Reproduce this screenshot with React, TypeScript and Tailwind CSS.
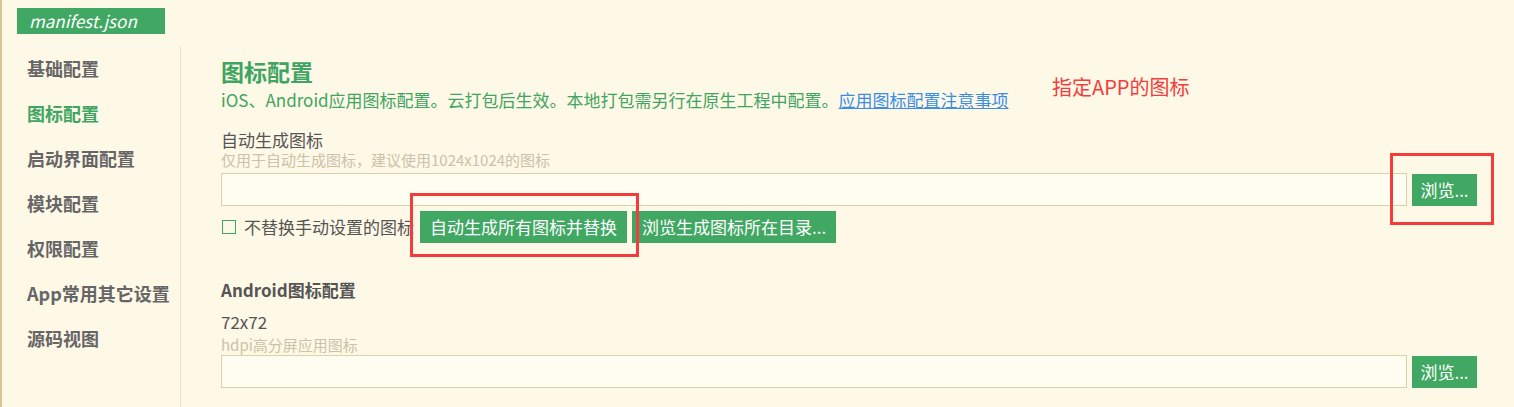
const menu = ["基础配置", "图标配置", "启动界面配置", "模块配置", "权限配置", "App常用其它设置", "源码视图"];

const Btn = ({ label, w }: { label: string; w?: string }) => (
  <button className={`h-[32px] ${w ?? ""} shrink-0 whitespace-nowrap bg-[#41a863] px-[10px] text-[17px] leading-[32px] text-white`}>
    {label}
  </button>
);

const FileRow = () => (
  <div className="flex items-center gap-[5px]">
    <div className="h-[33px] flex-1 border border-[#dcd0a8] bg-[#fffcf2]" />
    <Btn label="浏览..." w="w-[65px] !px-[6px]" />
  </div>
);

export default function App() {
  return (
    <div
      className="relative h-[407px] w-full overflow-hidden border-l-2 border-[#d6c795] bg-[#fef8e6]"
      style={{ fontFamily: '"Noto Sans CJK SC", "Noto Sans", sans-serif' }}
    >
      <div className="pl-[15px] pt-2">
        <div className="h-[26px] w-[148px] bg-[#41a863] pl-[12px] text-[17px] italic leading-[26px] text-white">
          manifest.json
        </div>
      </div>

      <div className="mt-[12px] flex">
        <div className="h-[400px] w-[179px] shrink-0 border-r border-[#efe3c2] pl-[25px]">
          {menu.map((m, i) => (
            <div
              key={m}
              className={`h-[45px] text-[18px] font-bold leading-[45px] ${i === 1 ? "text-[#3fa562]" : "text-[#666]"}`}
            >
              {m}
            </div>
          ))}
        </div>

        <div className="flex-1 pl-[40px] pr-[37px] pt-[10px]">
          <div className="text-[23px] font-bold leading-[30px] text-[#3fa562]">图标配置</div>
          <div className="mt-[3px] text-[17px] leading-[22px] text-[#3fa562]">
            iOS、Android应用图标配置。云打包后生效。本地打包需另行在原生工程中配置。
            <a href="#" className="text-[#3a8ee6] underline">应用图标配置注意事项</a>
          </div>

          <div className="mt-[19px] text-[17px] leading-[20px] text-[#555]">自动生成图标</div>
          <div className="text-[15px] leading-[20px] text-[#cbc2a9]">仅用于自动生成图标，建议使用1024x1024的图标</div>
          <div className="mt-[3px]">
            <FileRow />
          </div>

          <div className="mt-[5px] flex items-center">
            <span className="ml-[1px] h-[14px] w-[14px] border border-[#41a863]" />
            <span className="ml-[8px] text-[17px] text-[#555]">不替换手动设置的图标</span>
            <div className="ml-[6px] flex gap-[5px]">
              <Btn label="自动生成所有图标并替换" />
              <Btn label="浏览生成图标所在目录..." />
            </div>
          </div>

          <div className="mt-[36px] text-[17px] font-bold leading-[22px] text-[#555]">Android图标配置</div>
          <div className="mt-[10px] text-[17px] leading-[22px] text-[#555]">72x72</div>
          <div className="mt-[2px] text-[15px] leading-[19px] text-[#cbc2a9]">hdpi高分屏应用图标</div>
          <div className="mt-[1px]">
            <FileRow />
          </div>
        </div>
      </div>

      <div className="absolute left-[1050px] top-[73px] text-[20px] leading-[28px] text-[#f43c3c]">指定APP的图标</div>
      <div className="absolute left-[408px] top-[193px] h-[64px] w-[229px] border-[3px] border-[#f43c3c]" />
      <div className="absolute left-[1388px] top-[153px] h-[72px] w-[104px] border-[3px] border-[#f43c3c]" />
    </div>
  );
}
